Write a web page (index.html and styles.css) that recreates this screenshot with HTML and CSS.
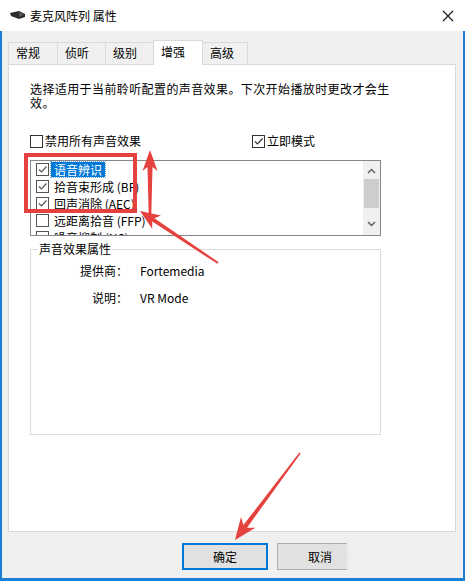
FILE: index.html
```html
<!DOCTYPE html>
<html lang="zh-CN">
  <head>
    <meta charset="UTF-8" />
    <meta name="viewport" content="width=device-width, initial-scale=1.0" />
    <title>麦克风阵列 属性</title>
    <link rel="stylesheet" href="styles.css">
  </head>
  <body>
    <div class="window">
      <!-- Title bar -->
      <div class="titlebar">
        <svg class="app-icon" width="16" height="9" viewBox="0 0 16 9">
          <polygon points="0,2 9,0 15,3 15,6 9,8 1,5" fill="#2b2b2b" />
          <polygon points="9,1 14,3.5 9,6" fill="#555" />
        </svg>
        <span class="title">麦克风阵列 属性</span>
        <svg class="close" width="12" height="12" viewBox="0 0 12 12">
          <path d="M1 1 L11 11 M11 1 L1 11" stroke="#111" stroke-width="1.1" />
        </svg>
      </div>

      <div class="client">
        <!-- Tabs -->
        <div class="tabs">
          <div class="tab t1">常规</div>
          <div class="tab t2">侦听</div>
          <div class="tab t3">级别</div>
          <div class="tab active">增强</div>
          <div class="tab t5">高级</div>
        </div>

        <div class="panel">
          <p class="desc">选择适用于当前聆听配置的声音效果。下次开始播放时更改才会生效。</p>

          <div class="options">
            <label class="check">
              <span class="box"></span>禁用所有声音效果
            </label>
            <label class="check immediate">
              <span class="box checked">
                <svg width="11" height="11" viewBox="0 0 11 11"><path d="M2 5.5 L4.5 8 L9.5 2.5" fill="none" stroke="#333" stroke-width="1.2" /></svg>
              </span>立即模式
            </label>
          </div>

          <div class="listbox">
            <ul class="items">
              <li class="item">
                <span class="box checked"><svg width="11" height="11" viewBox="0 0 11 11"><path d="M2 5.5 L4.5 8 L9.5 2.5" fill="none" stroke="#555" stroke-width="1.2" /></svg></span>
                <span class="label selected">语音辨识</span>
              </li>
              <li class="item">
                <span class="box checked"><svg width="11" height="11" viewBox="0 0 11 11"><path d="M2 5.5 L4.5 8 L9.5 2.5" fill="none" stroke="#555" stroke-width="1.2" /></svg></span>
                <span class="label">拾音束形成 (BF)</span>
              </li>
              <li class="item">
                <span class="box checked"><svg width="11" height="11" viewBox="0 0 11 11"><path d="M2 5.5 L4.5 8 L9.5 2.5" fill="none" stroke="#555" stroke-width="1.2" /></svg></span>
                <span class="label">回声消除 (AEC)</span>
              </li>
              <li class="item">
                <span class="box"></span>
                <span class="label">远距离拾音 (FFP)</span>
              </li>
              <li class="item">
                <span class="box"></span>
                <span class="label">噪音抑制 (NS)</span>
              </li>
            </ul>
            <div class="scrollbar">
              <svg class="arrow" width="9" height="6" viewBox="0 0 9 6"><path d="M1 5 L4.5 1.5 L8 5" fill="none" stroke="#606060" stroke-width="1.5" /></svg>
              <div class="thumb"></div>
              <div class="track"></div>
              <svg class="arrow" width="9" height="6" viewBox="0 0 9 6"><path d="M1 1 L4.5 4.5 L8 1" fill="none" stroke="#606060" stroke-width="1.5" /></svg>
            </div>
          </div>

          <fieldset class="group">
            <legend>声音效果属性</legend>
            <div class="props">
              <span class="key">提供商：</span><span>Fortemedia</span>
              <span class="key">说明：</span><span>VR Mode</span>
            </div>
          </fieldset>
        </div>

        <div class="buttons">
          <button class="btn default">确定</button>
          <button class="btn cancel">取消</button>
        </div>
      </div>

      <!-- Red annotations drawn over the dialog -->
      <svg class="marks" width="465" height="581" viewBox="0 0 465 581">
        <rect x="26" y="155" width="109" height="56" fill="none" stroke="#e5413e" stroke-width="4" />
        <polygon fill="#e5413e" points="150,150 157.5,171 152.5,167 151.2,219 148.8,219 147.5,167 142.5,171" />
        <polygon fill="#e5413e" points="140,211 161,215.4 154.4,218.2 218.6,262.2 217.4,263.8 152.2,221.6 152.2,228.8" />
        <polygon fill="#e5413e" points="235,540 255.4,527.8 247,527.7 300.6,453.5 299.4,452.5 243.4,525.1 241,517" />
      </svg>
    </div>
  </body>
</html>
```

FILE: styles.css
```css
* {
  box-sizing: border-box;
  margin: 0;
  padding: 0;
}

body {
  font-family: "Noto Sans CJK SC", "Noto Sans", sans-serif;
  font-size: 12px;
  color: #000;
  background: #fff;
}

.window {
  position: relative;
  width: 465px;
  height: 581px;
  display: flex;
  flex-direction: column;
}

.titlebar {
  height: 31px;
  display: flex;
  align-items: center;
  padding: 0 11px 0 10px;
  background: #fff;
}

.title {
  margin-left: 4px;
  line-height: 16px;
}

.close {
  margin-left: auto;
}

.client {
  flex: 1;
  background: #f0f0f0;
  border-left: 2px solid #1c7fd6;
  border-right: 2px solid #1c7fd6;
  border-bottom: 3px solid #1c7fd6;
  padding: 9px 7px 0 6px;
}

.tabs {
  display: flex;
  align-items: flex-end;
  height: 24px;
  position: relative;
  z-index: 1;
}

.tab {
  height: 22px;
  border: 1px solid #d9d9d9;
  border-right: none;
  border-bottom: none;
  padding-left: 7px;
  line-height: 20px;
  background: #f0f0f0;
}

.t1 { width: 49px; }
.t2 { width: 48px; }
.t3 { width: 48px; }
.t5 { width: 45px; border-right: 1px solid #d9d9d9; }

.tab.active {
  width: 50px;
  height: 25px;
  margin-bottom: -1px;
  background: #fff;
  border-right: 1px solid #d9d9d9;
  line-height: 22px;
}

.tab.active + .tab {
  border-left: none;
}

.panel {
  height: 468px;
  background: #fff;
  border: 1px solid #d9d9d9;
  padding: 17px 0 0 21px;
}

.desc {
  width: 362px;
  line-height: 14px;
  letter-spacing: 0.4px;
}

.options {
  display: flex;
  margin-top: 23px;
  height: 16px;
  align-items: center;
}

.check {
  display: flex;
  align-items: center;
  line-height: 16px;
}

.check .box {
  margin-right: 2px;
}

.immediate {
  margin-left: 111px;
}

.box {
  width: 13px;
  height: 13px;
  border: 1px solid #333;
  background: #fff;
  display: inline-flex;
  align-items: center;
  justify-content: center;
  flex: none;
}

.listbox {
  margin-top: 11px;
  width: 351px;
  height: 76px;
  border: 1px solid #828790;
  display: flex;
  overflow: hidden;
}

.items {
  flex: 1;
  list-style: none;
  padding: 0 0 0 5px;
  overflow: hidden;
}

.item {
  height: 17px;
  display: flex;
  align-items: center;
}

.item .box {
  border-color: #555;
}

.label {
  margin-left: 2px;
  padding: 0 3px;
  line-height: 15px;
}

.label.selected {
  background: #0078d7;
  color: #fff;
  outline: 1px dotted #7aa9d8;
}

.scrollbar {
  width: 17px;
  background: #f0f0f0;
  display: flex;
  flex-direction: column;
  align-items: center;
}

.arrow {
  margin: 7px 0 5px;
  flex: none;
}

.scrollbar .arrow:last-child {
  margin: 4px 0 8px;
}

.thumb {
  width: 15px;
  height: 29px;
  background: #cdcdcd;
}

.track {
  flex: 1;
}

.group {
  margin-top: 5px;
  width: 351px;
  height: 194px;
  border: 1px solid #dcdcdc;
  padding: 0 0 0 7px;
}

.group legend {
  padding: 0 1px;
  line-height: 16px;
}

.props {
  display: grid;
  grid-template-columns: 90px auto;
  column-gap: 12px;
  row-gap: 11px;
  padding-top: 6px;
  line-height: 16px;
}

.key {
  text-align: right;
}

.buttons {
  display: flex;
  padding: 11px 0 0 174px;
}

.btn {
  font-family: inherit;
  font-size: 12px;
  height: 27px;
  background: #e1e1e1;
  border: 1px solid #adadad;
  color: #000;
}

.btn.default {
  width: 86px;
  border: 2px solid #0078d7;
}

.btn.cancel {
  width: 70px;
  margin-left: 9px;
  border-right: none;
  text-align: left;
  padding-left: 30px;
  box-shadow: 3px 0 4px -2px #e8e8e8;
}

.marks {
  position: absolute;
  top: 0;
  left: 0;
  pointer-events: none;
}
```
